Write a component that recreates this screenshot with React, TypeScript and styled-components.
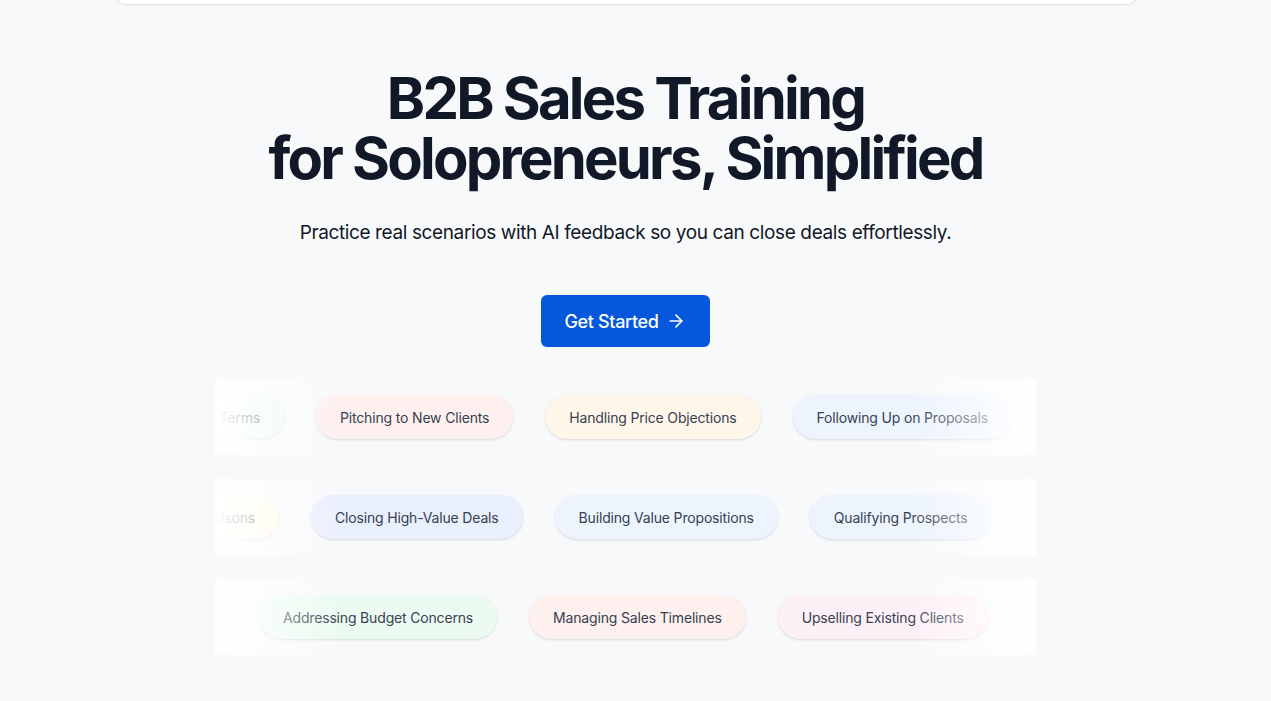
import React from 'react'
import styled, { createGlobalStyle } from 'styled-components'

const GlobalStyle = createGlobalStyle`
  html, body {
    margin: 0;
    padding: 0;
    background: #f8f9fb;
    font-family: Inter, 'Noto Sans', sans-serif;
    overflow: hidden;
  }
`

type Tone = 'red' | 'orange' | 'blue' | 'indigo' | 'green' | 'pink' | 'yellow'

const tones: Record<Tone, string> = {
    red: '#fef0ef',
    orange: '#fff6ea',
    blue: '#edf4fe',
    indigo: '#e9effd',
    green: '#ebfbf1',
    pink: '#fdf0f6',
    yellow: '#fefbe8'
}

const rows: { lead: number; pills: [string, Tone][] }[] = [
    {
        lead: 69,
        pills: [
            ['Negotiating Contract Terms', 'green'],
            ['Pitching to New Clients', 'red'],
            ['Handling Price Objections', 'orange'],
            ['Following Up on Proposals', 'blue'],
            ['Closing High-Value Deals', 'indigo']
        ]
    },
    {
        lead: 64,
        pills: [
            ['Handling Competitor Comparisons', 'yellow'],
            ['Closing High-Value Deals', 'indigo'],
            ['Building Value Propositions', 'blue'],
            ['Qualifying Prospects', 'blue'],
            ['Negotiating Contract Terms', 'green']
        ]
    },
    {
        lead: 12,
        pills: [
            ['Qualifying Prospects', 'blue'],
            ['Addressing Budget Concerns', 'green'],
            ['Managing Sales Timelines', 'red'],
            ['Upselling Existing Clients', 'pink'],
            ['Handling Price Objections', 'orange']
        ]
    }
]

function App(): JSX.Element {
    return (
        <Page>
            <GlobalStyle />
            <NavCard />
            <Hero>
                <Title>
                    B2B Sales Training
                    <br />
                    for Solopreneurs, Simplified
                </Title>
                <Subtitle>Practice real scenarios with AI feedback so you can close deals effortlessly.</Subtitle>
                <CtaButton>
                    Get Started
                    <svg width="20" height="20" viewBox="0 0 24 24" fill="none" stroke="currentColor" strokeWidth="2" strokeLinecap="round" strokeLinejoin="round">
                        <path d="M5 12h14" />
                        <path d="m12 5 7 7-7 7" />
                    </svg>
                </CtaButton>
            </Hero>
            <Marquee>
                {rows.map((row, i) => (
                    <Row key={i}>
                        <Track>
                            <Lead $width={row.lead}>
                                <Pill $tone={row.pills[0][1]}>{row.pills[0][0]}</Pill>
                            </Lead>
                            {row.pills.slice(1).map(([label, tone], j) => (
                                <Pill key={j} $tone={tone}>
                                    {label}
                                </Pill>
                            ))}
                        </Track>
                        <FadeLeft />
                        <FadeRight />
                    </Row>
                ))}
            </Marquee>
        </Page>
    )
}

const Page = styled.div`
  width: 1251px;
  min-height: 701px;
  display: flex;
  flex-direction: column;
  align-items: center;
`

const NavCard = styled.header`
  width: 1023px;
  height: 64px;
  margin-top: -60px;
  margin-left: 2px;
  background: #ffffff;
  border-radius: 12px;
  box-shadow: 0 1px 3px rgba(0, 0, 0, 0.08), 0 0 0 1px rgba(0, 0, 0, 0.03);
`

const Hero = styled.section`
  display: flex;
  flex-direction: column;
  align-items: center;
  padding-top: 64px;
`

const Title = styled.h1`
  margin: 0;
  font-size: 58px;
  line-height: 60px;
  font-weight: 700;
  letter-spacing: -0.048em;
  color: #111827;
  text-align: center;
`

const Subtitle = styled.p`
  margin: 31px 0 0;
  font-size: 19px;
  line-height: 28px;
  letter-spacing: -0.02em;
  color: #111827;
  text-align: center;
`

const CtaButton = styled.button`
  margin-top: 48px;
  height: 52px;
  padding: 0 24px;
  display: inline-flex;
  align-items: center;
  gap: 8px;
  border: none;
  border-radius: 6px;
  background: #0558dc;
  color: #ffffff;
  font-family: Inter, sans-serif;
  font-size: 18px;
  font-weight: 500;
  letter-spacing: -0.02em;
  cursor: pointer;
`

const Marquee = styled.div`
  width: 821px;
  margin-top: 32px;
  display: flex;
  flex-direction: column;
  gap: 24px;
`

const Row = styled.div`
  position: relative;
  height: 76px;
  overflow: hidden;
`

const Track = styled.div`
  display: flex;
  align-items: center;
  gap: 32px;
  height: 100%;
`

const Lead = styled.div<{ $width: number }>`
  width: ${({ $width }) => $width}px;
  flex-shrink: 0;
  display: flex;
  justify-content: flex-end;
`

const Pill = styled.div<{ $tone: Tone }>`
  flex-shrink: 0;
  height: 44px;
  padding: 0 24px;
  display: flex;
  align-items: center;
  border-radius: 999px;
  background: ${({ $tone }) => tones[$tone]};
  box-shadow: 0 1px 3px rgba(0, 0, 0, 0.1), 0 1px 2px -1px rgba(0, 0, 0, 0.1);
  color: #374151;
  font-size: 14px;
  letter-spacing: -0.012em;
  white-space: nowrap;
`

const FadeLeft = styled.div`
  position: absolute;
  top: 0;
  left: 0;
  bottom: 0;
  width: 128px;
  background: linear-gradient(to right, #ffffff, rgba(255, 255, 255, 0));
  pointer-events: none;
`

const FadeRight = styled(FadeLeft)`
  left: auto;
  right: 0;
  background: linear-gradient(to left, #ffffff, rgba(255, 255, 255, 0));
`

export default App
